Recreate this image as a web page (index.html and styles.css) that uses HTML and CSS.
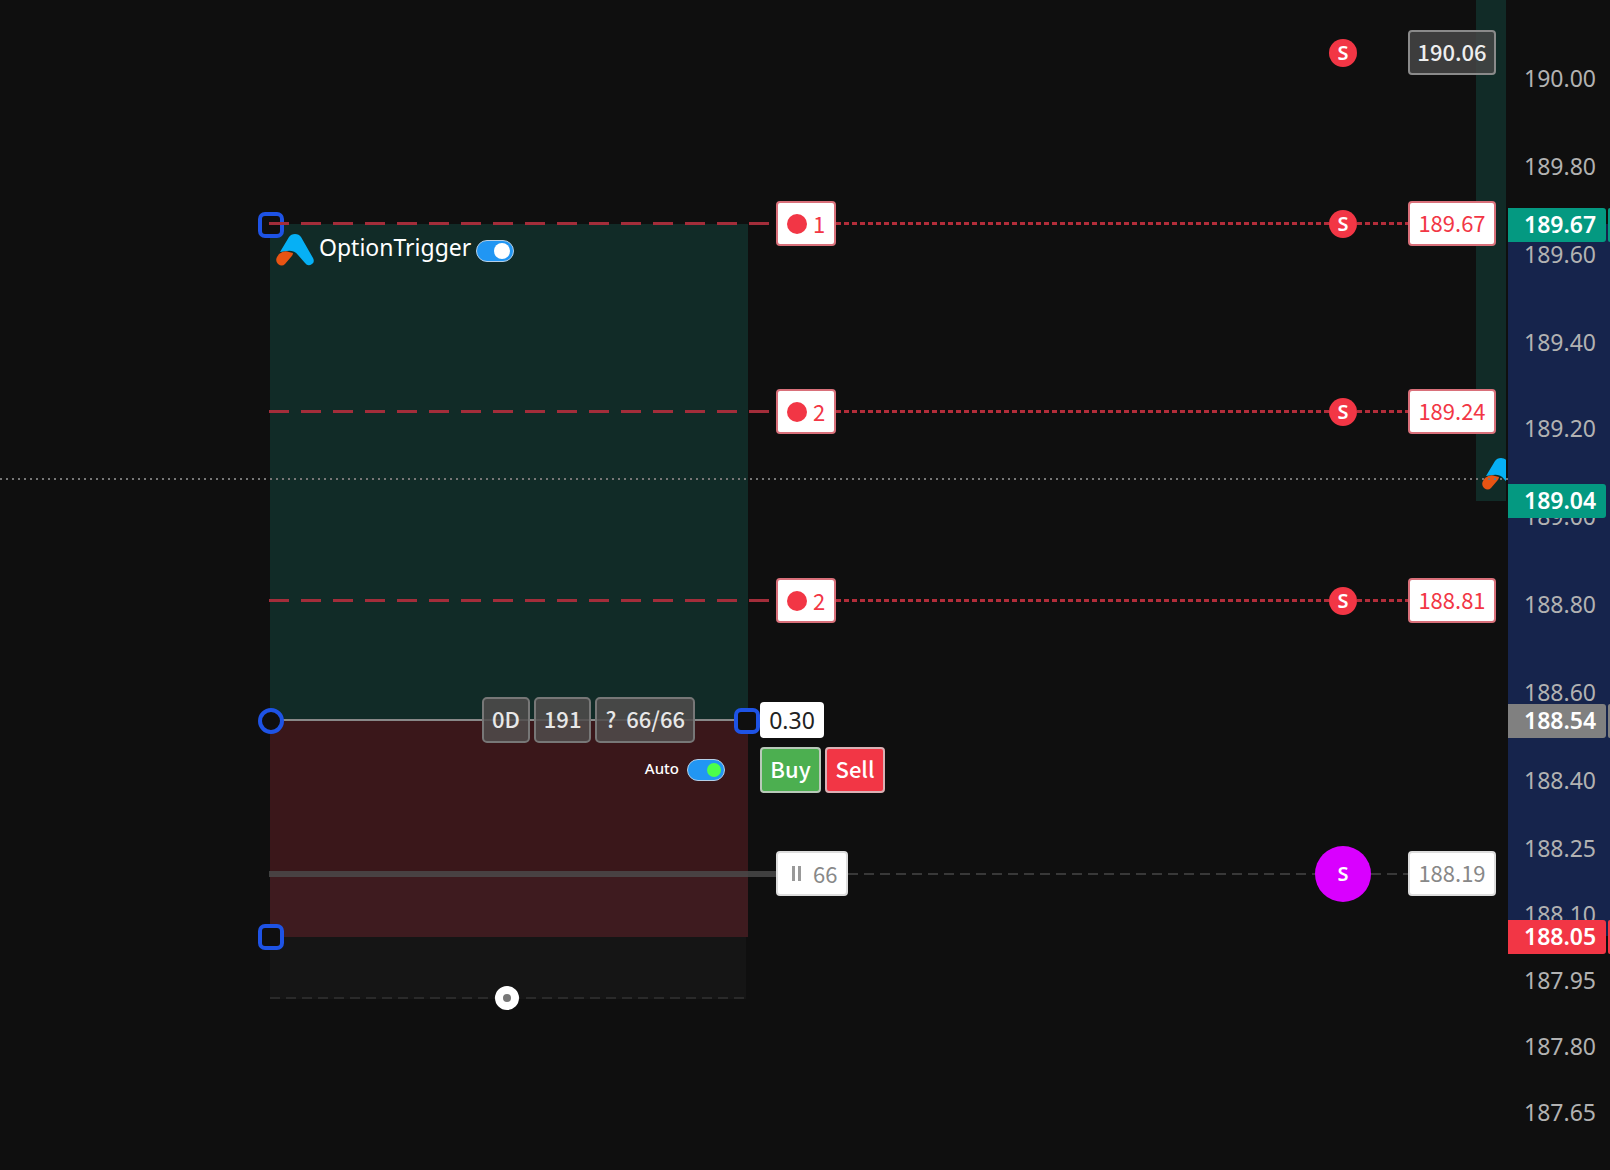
FILE: index.html
```
<!DOCTYPE html>
<html lang="en">
<head>
  <meta charset="UTF-8" />
  <meta name="viewport" content="width=device-width, initial-scale=1.0"/>
  <title>OptionTrigger</title>
  <link rel="stylesheet" href="styles.css">
</head>
<body>
  <svg width="0" height="0" class="defs" aria-hidden="true">
    <symbol id="logo" viewBox="0 0 38 32">
      <path fill="#06b0f5" d="M13 3Q15 0 19 0Q23 0 25 3L37 24Q39 28 36 30Q32 33 29 29L22 21Q18 16 11 17L4 18Z"/>
      <path fill="#e85413" d="M3 20Q8 16 13 18L17 19Q17 21 15 23L9 30Q6 33 2 30Q-1 27 1 23Z"/>
    </symbol>
  </svg>

  <div class="screen">
    <main class="chart">
      <!-- next position, cut off by the price scale -->
      <div class="next-position">
        <svg class="logo"><use href="#logo"/></svg>
      </div>

      <!-- position box -->
      <section class="position">
        <div class="profit">
          <svg class="logo"><use href="#logo"/></svg>
          <label for="trigger">OptionTrigger</label>
          <input type="checkbox" class="switch" id="trigger" checked>
        </div>
        <div class="loss">
          <label for="auto">Auto</label>
          <input type="checkbox" class="switch auto" id="auto" checked>
        </div>
        <div class="trail"></div>
        <span class="handle top"></span>
        <span class="handle bottom"></span>
        <span class="trail-handle"></span>
      </section>
      <div class="last-price" style="--y: 479px"></div>

      <!-- orders -->
      <div class="order alert" style="--y: 53px">
        <span class="side">S</span>
        <span class="tail"></span>
        <button class="badge price">190.06</button>
      </div>
      <div class="order target" style="--y: 224px">
        <span class="level"></span>
        <button class="badge qty"><i class="dot"></i>1</button>
        <span class="line"></span>
        <span class="side">S</span>
        <span class="tail"></span>
        <button class="badge price">189.67</button>
      </div>
      <div class="order target" style="--y: 412px">
        <span class="level"></span>
        <button class="badge qty"><i class="dot"></i>2</button>
        <span class="line"></span>
        <span class="side">S</span>
        <span class="tail"></span>
        <button class="badge price">189.24</button>
      </div>
      <div class="order target" style="--y: 601px">
        <span class="level"></span>
        <button class="badge qty"><i class="dot"></i>2</button>
        <span class="line"></span>
        <span class="side">S</span>
        <span class="tail"></span>
        <button class="badge price">188.81</button>
      </div>
      <div class="order stop" style="--y: 874px">
        <span class="level"></span>
        <button class="badge qty"><i class="pause"></i>66</button>
        <span class="line"></span>
        <span class="side">S</span>
        <span class="tail"></span>
        <button class="badge price">188.19</button>
      </div>

      <!-- entry -->
      <div class="entry" style="--y: 721px">
        <button class="pill">0D</button>
        <button class="pill">191</button>
        <button class="pill count"><span>?</span><span>66/66</span></button>
        <span class="handle start"></span>
        <span class="handle end"></span>
        <form class="ticket">
          <input type="text" class="amount" value="0.30" aria-label="Limit price">
          <div class="actions">
            <button type="button" class="buy">Buy</button>
            <button type="button" class="sell">Sell</button>
          </div>
        </form>
      </div>
    </main>

    <aside class="scale">
      <div class="range"></div>
      <span class="tick" style="--y: -9px">190.20</span>
      <span class="tick" style="--y: 79px">190.00</span>
      <span class="tick" style="--y: 167px">189.80</span>
      <span class="tick" style="--y: 255px">189.60</span>
      <span class="tick" style="--y: 343px">189.40</span>
      <span class="tick" style="--y: 429px">189.20</span>
      <span class="tick" style="--y: 517px">189.00</span>
      <span class="tick" style="--y: 605px">188.80</span>
      <span class="tick" style="--y: 693px">188.60</span>
      <span class="tick" style="--y: 781px">188.40</span>
      <span class="tick" style="--y: 849px">188.25</span>
      <span class="tick" style="--y: 915px">188.10</span>
      <span class="tick" style="--y: 981px">187.95</span>
      <span class="tick" style="--y: 1047px">187.80</span>
      <span class="tick" style="--y: 1113px">187.65</span>
      <span class="tick" style="--y: 1179px">187.50</span>
      <span class="tick tag up paired" style="--y: 225px">189.67</span>
      <span class="tick tag up" style="--y: 501px">189.04</span>
      <span class="tick tag flat paired" style="--y: 721px">188.54</span>
      <span class="tick tag down paired" style="--y: 937px">188.05</span>
    </aside>
  </div>
</body>
</html>
```

FILE: styles.css
```
* {
  box-sizing: border-box;
}
body {
  margin: 0;
  background: #0f0f0f;
  color: #fff;
  font-family: "Noto Sans CJK JP", "Noto Sans", sans-serif;
  font-size: 22px;
}
button, input {
  font: inherit;
  margin: 0;
  padding: 0;
}
.defs {
  position: absolute;
}
.screen {
  display: grid;
  grid-template-columns: 1fr 102px;
  height: 100vh;
  overflow: hidden;
}
.chart, .scale {
  position: relative;
  min-width: 0;
}
.logo {
  display: block;
  flex: none;
  width: 38px;
  height: 32px;
}

/* next position and last price */
.next-position {
  position: absolute;
  top: 0;
  right: 2px;
  display: flex;
  align-items: flex-end;
  width: 30px;
  height: 501px;
  padding: 0 0 11px 6px;
  overflow: hidden;
  background: #112b27;
}
.last-price {
  position: absolute;
  top: var(--y);
  left: 0;
  right: 0;
  height: 2px;
  margin-top: -1px;
  background: repeating-linear-gradient(90deg, #777 0 2px, transparent 2px 6px);
}

/* position box */
.position {
  position: absolute;
  top: 224px;
  left: 270px;
  width: 478px;
}
.profit {
  display: flex;
  align-items: flex-start;
  height: 497px;
  padding: 10px 6px;
  background: #112b27;
}
.profit label {
  width: 158px;
  padding-left: 5px;
  font-family: "Noto Sans", sans-serif;
  font-size: 23px;
  line-height: 26px;
}
.profit .switch {
  margin-top: 6px;
}
.profit label + .switch {
  margin-left: 4px;
}
.loss {
  display: flex;
  justify-content: flex-end;
  height: 216px;
  padding: 38px 23px;
  background: linear-gradient(#3a171a 154px, #3e1b1f 154px);
}
.loss label {
  margin-right: 8px;
  font-family: "Noto Sans", sans-serif;
  font-size: 15px;
  font-weight: 500;
  line-height: 18px;
}
.trail {
  height: 62px;
  margin-right: 2px;
  background:
    repeating-linear-gradient(90deg, #2a2a2a 0 10px, transparent 10px 16px) bottom / 100% 2px no-repeat,
    #151515;
}
.trail-handle {
  position: absolute;
  bottom: -11px;
  left: 225px;
  width: 24px;
  height: 24px;
  border: 8px solid #fff;
  border-radius: 50%;
  background: #777;
}
.switch {
  appearance: none;
  display: flex;
  justify-content: flex-end;
  flex: none;
  width: 38px;
  height: 22px;
  padding: 2px 3px;
  border: 1px solid #b5cfe6;
  border-radius: 11px;
  background: #2196f3;
}
.switch::before {
  content: "";
  width: 16px;
  height: 16px;
  border-radius: 50%;
  background: #fff;
}
.switch.auto::before {
  width: 14px;
  height: 14px;
  margin-top: 1px;
  background: #4cff4c;
}
.handle {
  position: absolute;
  left: -12px;
  width: 26px;
  height: 26px;
  border: 4px solid #1e53e5;
  border-radius: 7px;
  background: #0f0f0f;
}
.handle.top {
  top: -12px;
}
.handle.bottom {
  top: 700px;
}

/* orders */
.order {
  position: absolute;
  top: calc(var(--y) - 28px);
  left: 269px;
  right: 12px;
  display: flex;
  align-items: center;
  justify-content: flex-end;
  height: 55px;
}
.level {
  width: 507px;
  height: 3px;
  background: repeating-linear-gradient(90deg, #a32d3a 0 20px, transparent 20px 32px);
}
.line, .tail {
  height: 3px;
  background: repeating-linear-gradient(90deg, #b32d3a 0 5px, transparent 5px 8px);
}
.line {
  flex: 1;
}
.tail {
  width: 51px;
}
.badge {
  height: 45px;
  border: 2px solid #d9707a;
  border-radius: 4px;
  background: #fff;
  color: #f23645;
  line-height: 36px;
}
.qty {
  display: flex;
  align-items: center;
  gap: 6px;
  width: 60px;
  padding: 0 0 2px 9px;
}
.price {
  width: 88px;
  padding-bottom: 4px;
}
.side {
  display: flex;
  align-items: center;
  justify-content: center;
  width: 28px;
  height: 28px;
  border-radius: 50%;
  background: #f23645;
  font-family: "Noto Sans", sans-serif;
  font-size: 20px;
  font-weight: 600;
  line-height: 28px;
}
.dot {
  width: 20px;
  height: 20px;
  margin-top: 2px;
  border-radius: 50%;
  background: #f23645;
}
.pause {
  width: 9px;
  height: 15px;
  margin: 2px 6px 0 5px;
  border: solid #999;
  border-width: 0 3px;
}
.alert .badge {
  border-color: #8a8a8a;
  background: rgba(72, 72, 72, .8);
  color: #eee;
  font-weight: 500;
}
.alert .tail {
  background: none;
}
.stop .badge {
  border-color: #ddd;
  color: #888;
}
.stop .qty {
  width: 72px;
}
.stop .level {
  height: 6px;
  background: rgba(76, 76, 76, .8);
}
.stop .line, .stop .tail {
  height: 2px;
  background: repeating-linear-gradient(90deg, #383838 0 10px, transparent 10px 16px);
}
.stop .tail {
  width: 37px;
}
.stop .side {
  width: 56px;
  height: 56px;
  background: #d900ff;
}

/* entry */
.entry {
  position: absolute;
  top: calc(var(--y) - 24px);
  left: 270px;
  display: flex;
  justify-content: flex-end;
  gap: 4px;
  width: 478px;
  padding-right: 53px;
  background: linear-gradient(#888, #888) center / 100% 2px no-repeat;
}
.pill {
  height: 46px;
  padding: 0 8px 4px;
  border: 2px solid #777;
  border-radius: 5px;
  background: rgba(80, 76, 76, .85);
  color: #e8e8e8;
  font-weight: 500;
  line-height: 38px;
}
.count {
  display: flex;
  gap: 10px;
}
.handle.start {
  top: 11px;
  border-radius: 50%;
}
.handle.end {
  top: 11px;
  left: 464px;
}
.ticket {
  position: absolute;
  top: 5px;
  left: 490px;
}
.amount {
  display: block;
  width: 64px;
  height: 36px;
  border: 0;
  border-radius: 4px;
  background: #fff;
  color: #222;
  font-family: "Noto Sans", sans-serif;
  font-size: 23px;
  text-align: center;
}
.actions {
  display: flex;
  gap: 4px;
  margin-top: 9px;
}
.buy, .sell {
  width: 61px;
  height: 46px;
  padding-bottom: 4px;
  border: 2px solid #b9c9b9;
  border-radius: 4px;
  background: #4caf50;
  color: #fff;
  font-weight: 500;
  line-height: 38px;
}
.sell {
  width: 60px;
  border-color: #d9b0b4;
  background: #f23645;
}

/* price scale */
.range {
  position: absolute;
  top: 224px;
  left: 0;
  right: 0;
  height: 712px;
  background: #16244c;
}
.tick {
  position: absolute;
  top: calc(var(--y) - 17px);
  left: 0;
  width: 98px;
  height: 34px;
  padding-left: 16px;
  color: #b2b2b2;
  font-family: "Noto Sans", sans-serif;
  font-size: 23px;
  line-height: 32px;
}
.tag {
  border-radius: 0 3px 3px 0;
  color: #fff;
  font-weight: 600;
}
.up {
  background: #049981;
}
.flat {
  background: #808080;
}
.down {
  background: #f23645;
}
.paired::after {
  content: "";
  position: absolute;
  top: 0;
  left: 100px;
  width: 2px;
  height: 34px;
  border-radius: 2px 0 0 2px;
  background: inherit;
}
```
